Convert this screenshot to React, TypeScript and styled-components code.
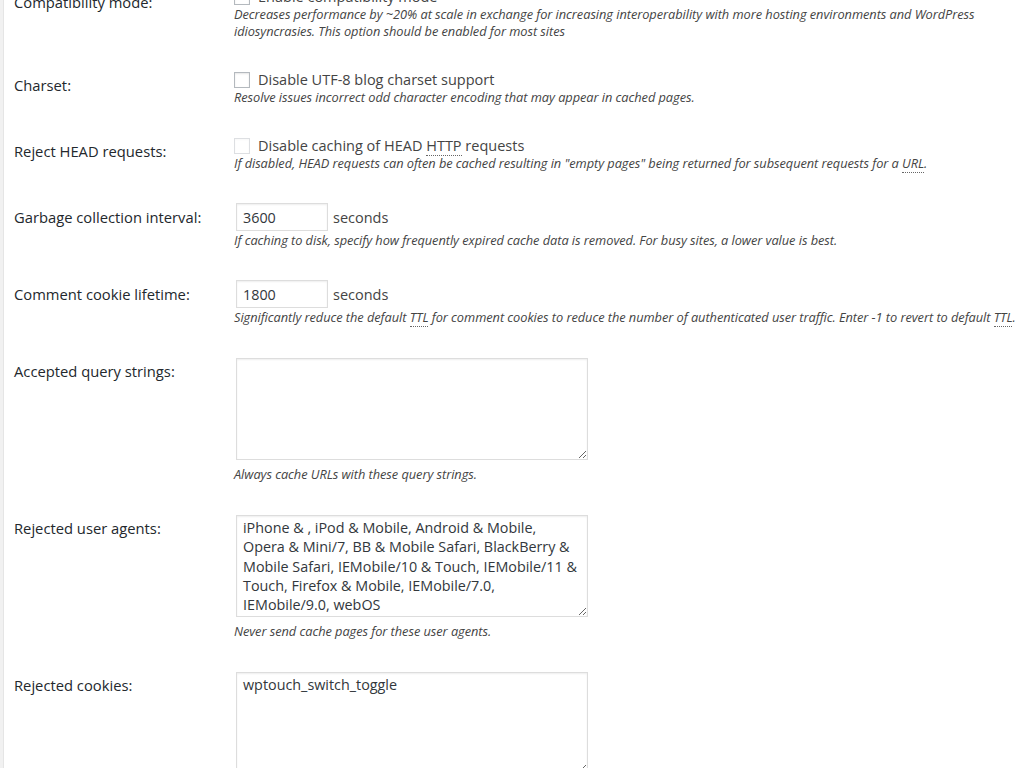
import React from 'react'
import styled, { createGlobalStyle } from 'styled-components'

const GlobalStyle = createGlobalStyle`
  html, body {
    margin: 0;
    padding: 0;
    background: #f1f1f1;
    font-family: 'Open Sans', 'Liberation Sans', sans-serif;
    color: #444;
    overflow: hidden;
  }
`

const Panel = styled.div`
  margin-left: 3px;
  border-left: 1px solid #e5e5e5;
  background: #fff;
  min-height: 100vh;
  padding-left: 10px;
  overflow: hidden;
`

// the page is scrolled a little, the first row is cut at the top
const FormTable = styled.div`
  margin-top: -28px;
`

const Row = styled.div`
  display: grid;
  grid-template-columns: 220px 1fr;
`

const Label = styled.div`
  padding: 21px 0 19px;
  font-size: 14.75px;
  line-height: 18px;
  color: #23282d;
  white-space: nowrap;
`

const Field = styled.div`
  padding: 15px 0;
  min-width: 0;
`

const CheckLine = styled.label`
  display: flex;
  align-items: center;
  height: 19px;
  font-size: 14.5px;
  line-height: 19px;
  color: #444;
  white-space: nowrap;
`

const Check = styled.input.attrs({ type: 'checkbox' })`
  appearance: none;
  width: 16px;
  height: 16px;
  margin: 0 8px 0 0;
  border: 1px solid #b4b9be;
  background: #fff;
  box-shadow: inset 0 1px 2px rgba(0, 0, 0, 0.1);
  box-sizing: border-box;
  flex-shrink: 0;

  &:disabled {
    border-color: rgba(180, 185, 190, 0.45);
    box-shadow: inset 0 1px 2px rgba(0, 0, 0, 0.03);
  }
`

const Description = styled.p`
  margin: 0;
  font-size: 12.8px;
  letter-spacing: -0.05px;
  line-height: 17px;
  font-style: italic;
  color: #444;
`

const Abbr = styled.abbr`
  text-decoration: none;
  border-bottom: 1px dotted #666;
`

const InputLine = styled.div`
  display: flex;
  align-items: center;
  gap: 5px;
  font-size: 14.5px;
  color: #444;
`

const NumberInput = styled.input`
  width: 92px;
  height: 28px;
  margin: 1px 0 1px 2px;
  padding: 0 6px;
  box-sizing: border-box;
  border: 1px solid #ddd;
  box-shadow: inset 0 1px 2px rgba(0, 0, 0, 0.07);
  font-family: 'Open Sans', 'Liberation Sans', sans-serif;
  font-size: 14.35px;
  color: #32373c;
  outline: none;
`

const TextArea = styled.textarea`
  display: block;
  width: 352px;
  height: 102px;
  margin: 2px 2px 6px;
  padding: 2px 6px;
  box-sizing: border-box;
  border: 1px solid #ddd;
  box-shadow: inset 0 1px 2px rgba(0, 0, 0, 0.07);
  font-family: 'Open Sans', 'Liberation Sans', sans-serif;
  font-size: 14.35px;
  line-height: 19.25px;
  color: #32373c;
  outline: none;
  resize: vertical;
  white-space: pre-wrap;
`

const userAgents = [
  'iPhone & , iPod & Mobile, Android & Mobile,',
  'Opera & Mini/7, BB & Mobile Safari, BlackBerry &',
  'Mobile Safari, IEMobile/10 & Touch, IEMobile/11 &',
  'Touch, Firefox & Mobile, IEMobile/7.0,',
  'IEMobile/9.0, webOS',
].join('\n')

const App = () => (
  <>
    <GlobalStyle />
    <Panel>
      <FormTable>
        <Row>
          <Label>Compatibility mode:</Label>
          <Field>
            <CheckLine>
              <Check defaultChecked={false} />
              Enable compatibility mode
            </CheckLine>
            <Description>
              Decreases performance by ~20% at scale in exchange for increasing interoperability with more hosting
              environments and WordPress idiosyncrasies. This option should be enabled for most sites
            </Description>
          </Field>
        </Row>

        <Row>
          <Label>Charset:</Label>
          <Field>
            <CheckLine>
              <Check />
              Disable UTF-8 blog charset support
            </CheckLine>
            <Description>Resolve issues incorrect odd character encoding that may appear in cached pages.</Description>
          </Field>
        </Row>

        <Row>
          <Label>Reject HEAD requests:</Label>
          <Field>
            <CheckLine>
              <Check disabled />
              Disable caching of HEAD&nbsp;<Abbr title="Hypertext Transfer Protocol">HTTP</Abbr>&nbsp;requests
            </CheckLine>
            <Description>
              If disabled, HEAD requests can often be cached resulting in "empty pages" being returned for subsequent
              requests for a <Abbr title="Uniform Resource Locator">URL</Abbr>.
            </Description>
          </Field>
        </Row>

        <Row>
          <Label>Garbage collection interval:</Label>
          <Field>
            <InputLine>
              <NumberInput defaultValue="3600" />
              seconds
            </InputLine>
            <Description>
              If caching to disk, specify how frequently expired cache data is removed. For busy sites, a lower value is
              best.
            </Description>
          </Field>
        </Row>

        <Row>
          <Label>Comment cookie lifetime:</Label>
          <Field>
            <InputLine>
              <NumberInput defaultValue="1800" />
              seconds
            </InputLine>
            <Description>
              Significantly reduce the default <Abbr title="Time to Live">TTL</Abbr> for comment cookies to reduce the
              number of authenticated user traffic. Enter -1 to revert to default <Abbr title="Time to Live">TTL</Abbr>.
            </Description>
          </Field>
        </Row>

        <Row>
          <Label>Accepted query strings:</Label>
          <Field>
            <TextArea defaultValue="" />
            <Description>Always cache URLs with these query strings.</Description>
          </Field>
        </Row>

        <Row>
          <Label>Rejected user agents:</Label>
          <Field>
            <TextArea defaultValue={userAgents} />
            <Description>Never send cache pages for these user agents.</Description>
          </Field>
        </Row>

        <Row>
          <Label>Rejected cookies:</Label>
          <Field>
            <TextArea defaultValue="wptouch_switch_toggle" />
          </Field>
        </Row>
      </FormTable>
    </Panel>
  </>
)

export default App
